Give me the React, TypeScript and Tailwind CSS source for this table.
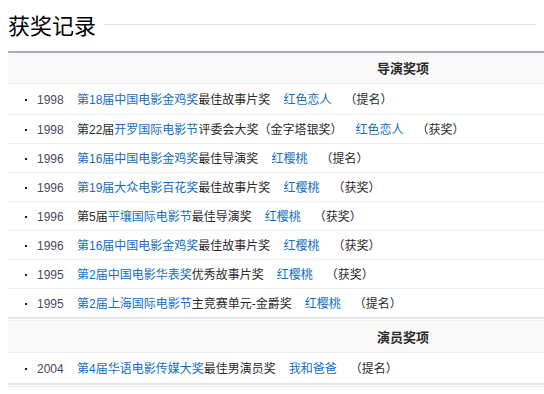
type Part = { t: string; link?: boolean };

type Award = {
  year: string;
  award: Part[];
  work: string;
  status: string;
};

const directorAwards: Award[] = [
  { year: "1998", award: [{ t: "第18届中国电影金鸡奖", link: true }, { t: "最佳故事片奖" }], work: "红色恋人", status: "（提名）" },
  { year: "1998", award: [{ t: "第22届" }, { t: "开罗国际电影节", link: true }, { t: "评委会大奖（金字塔银奖）" }], work: "红色恋人", status: "（获奖）" },
  { year: "1996", award: [{ t: "第16届中国电影金鸡奖", link: true }, { t: "最佳导演奖" }], work: "红樱桃", status: "（提名）" },
  { year: "1996", award: [{ t: "第19届大众电影百花奖", link: true }, { t: "最佳故事片奖" }], work: "红樱桃", status: "（获奖）" },
  { year: "1996", award: [{ t: "第5届" }, { t: "平壤国际电影节", link: true }, { t: "最佳导演奖" }], work: "红樱桃", status: "（获奖）" },
  { year: "1996", award: [{ t: "第16届中国电影金鸡奖", link: true }, { t: "最佳故事片奖" }], work: "红樱桃", status: "（获奖）" },
  { year: "1995", award: [{ t: "第2届中国电影华表奖", link: true }, { t: "优秀故事片奖" }], work: "红樱桃", status: "（获奖）" },
  { year: "1995", award: [{ t: "第2届上海国际电影节", link: true }, { t: "主竞赛单元-金爵奖" }], work: "红樱桃", status: "（提名）" },
];

const actorAwards: Award[] = [
  { year: "2004", award: [{ t: "第4届华语电影传媒大奖", link: true }, { t: "最佳男演员奖" }], work: "我和爸爸", status: "（提名）" },
];

function AwardRow({ item, className }: { item: Award; className: string }) {
  return (
    <div className={`flex items-center pl-[17px] pt-[2px] leading-[16px] whitespace-nowrap ${className}`}>
      <span className="w-[2px] h-[2px] bg-[#222]" />
      <span className="ml-[10px] w-[40px] text-[#4a4a5a]">{item.year}</span>
      <span>
        {item.award.map((p, i) =>
          p.link ? (
            <a key={i} className="text-[#136ec2]">{p.t}</a>
          ) : (
            <span key={i}>{p.t}</span>
          )
        )}
      </span>
      <a className="ml-[13px] text-[#136ec2]">{item.work}</a>
      <span className="ml-[13px]">{item.status}</span>
    </div>
  );
}

export default function App() {
  return (
    <div className="w-[544px] h-[394px] overflow-hidden bg-white text-[12px] text-[#2b2b2b] font-['Liberation_Sans','Noto_Sans_CJK_SC',sans-serif]">
      <div className="flex items-center h-[28px] mt-[10px] px-2">
        <h2 className="text-[22px] leading-[28px] text-black font-['Noto_Sans_CJK_SC',sans-serif]">获奖记录</h2>
        <div className="flex-1 h-px ml-2 bg-[#e3e3e3]" />
      </div>

      <div className="ml-2 mt-[13px] w-[790px]">
        <div className="h-[33px] flex items-center justify-center border-t-2 border-b border-t-[#a7adb3] border-b-[#eeeeee] bg-[#f9f9f9] text-[13px] font-bold font-['Noto_Sans_CJK_SC',sans-serif]">
          导演奖项
        </div>
        {directorAwards.map((item, i) => (
          <AwardRow
            key={i}
            item={item}
            className={
              i === 0
                ? "h-[31px] border-b border-[#eeeeee]"
                : i === directorAwards.length - 1
                ? "h-[30px] border-b-2 border-[#e6e6e6]"
                : "h-[29px] border-b border-[#eeeeee]"
            }
          />
        ))}

        <div className="mt-px h-[33px] flex items-center justify-center border-y border-[#eeeeee] bg-[#f9f9f9] text-[13px] font-bold font-['Noto_Sans_CJK_SC',sans-serif]">
          演员奖项
        </div>
        {actorAwards.map((item, i) => (
          <AwardRow key={i} item={item} className="h-[32px] border-b-2 border-[#e6e6e6]" />
        ))}
        <div className="mt-px h-px bg-[#ececec]" />
      </div>
    </div>
  );
}
